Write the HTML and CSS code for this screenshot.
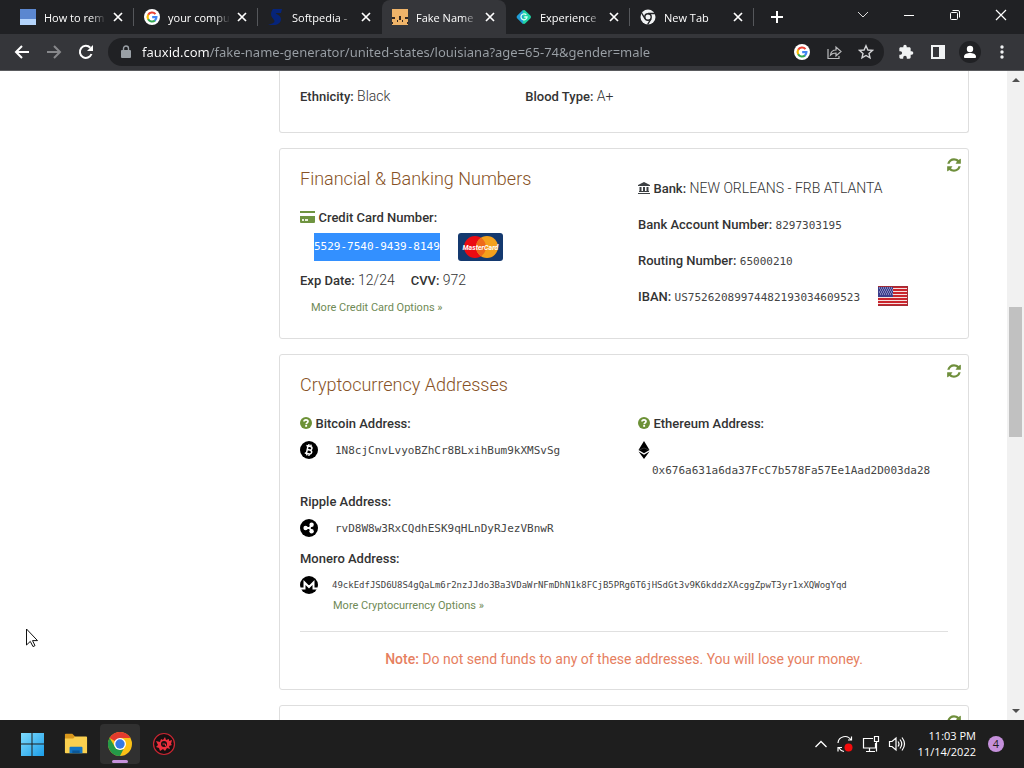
FILE: index.html
```html
<!DOCTYPE html>
<html lang="en">
<head>
<meta charset="utf-8">
<title>Fake Name Generator</title>
<link rel="stylesheet" href="styles.css">
</head>
<body>
<svg class="defs" aria-hidden="true">
  <symbol id="i-google" viewBox="0 0 18 18">
    <circle cx="9" cy="9" r="9" fill="#fff"/>
    <g fill="none" stroke-width="2.4">
      <path d="M12.9 5.7A5 5 0 0 0 4.7 6.5" stroke="#ea4335"/>
      <path d="M4.8 6.3a5.200 5.200 0 0 0 0 5.400" stroke="#fbbc05"/>
      <path d="M4.700 11.500a5 5 0 0 0 7.700 1.300" stroke="#34a853"/>
      <path d="M9.200 9.100H14a5 5 0 0 1-1.800 3.900" stroke="#4285f4"/>
    </g>
  </symbol>
  <symbol id="i-x" viewBox="0 0 10 10"><path d="M1 1l8 8M9 1L1 9" stroke="currentColor" stroke-width="1.700" fill="none"/></symbol>
  <symbol id="i-refresh" viewBox="0 0 1792 1792"><path fill="currentColor" d="M1639 1056q0 5-1 7-64 268-268 434.500t-478 166.500q-146 0-282.500-55t-243.500-157l-129 129q-19 19-45 19t-45-19-19-45v-448q0-26 19-45t45-19h448q26 0 45 19t19 45-19 45l-137 137q71 66 161 102t187 36q134 0 250-65t186-179q11-17 53-117 8-23 30-23h192q13 0 22.500 9.500t9.500 22.500zm25-800v448q0 26-19 45t-45 19h-448q-26 0-45-19t-19-45 19-45l138-138q-148-137-349-137-134 0-250 65t-186 179q-11 17-53 117-8 23-30 23h-199q-13 0-22.500-9.500t-9.500-22.500v-7q65-268 270-434.500t480-166.500q146 0 284 55.500t245 156.500l130-129q19-19 45-19t45 19 19 45z"/></symbol>
  <symbol id="i-help" viewBox="0 0 12 12"><circle cx="6" cy="6" r="6" fill="currentColor"/><path d="M4 4.600C4 2.300 8 2.300 8 4.500 8 5.900 6.200 5.900 6.200 7.300" fill="none" stroke="#fff" stroke-width="1.700"/><rect x="5.200" y="8" width="1.900" height="1.800" fill="#fff"/></symbol>
</svg>

<div class="screen">
  <header class="tabstrip">
    <div class="tabs" role="tablist">
      <div class="tab" role="tab">
        <svg class="favicon" viewBox="0 0 16 16"><path fill="#5b87d0" d="M0 0h16v10H0z"/><path fill="#b4d4fb" d="M0 10h16v6H0z"/></svg>
        <span class="tab-title">How to rem</span>
        <button class="tab-close" aria-label="Close tab"><svg><use href="#i-x"/></svg></button>
      </div>
      <div class="tab" role="tab">
        <svg class="favicon"><use href="#i-google"/></svg>
        <span class="tab-title">your compu</span>
        <button class="tab-close" aria-label="Close tab"><svg><use href="#i-x"/></svg></button>
      </div>
      <div class="tab plain" role="tab">
        <svg class="favicon" viewBox="0 0 16 16"><path fill="#06247a" d="M5 0h9l-1 4H8c-1 1 5 2 5 6 0 4-4 6-7 6H0c4-1 8-3 6-5C5 9 3 8 3 5c0-2 1-4 2-5z"/></svg>
        <span class="tab-title">Softpedia -</span>
        <button class="tab-close" aria-label="Close tab"><svg><use href="#i-x"/></svg></button>
      </div>
      <div class="tab active" role="tab" aria-selected="true">
        <svg class="favicon" viewBox="0 0 16 16"><path fill="#f0b469" d="M0 0h16v16H0z"/><path fill="#35281f" d="M0 8h3v2H0zM13 8h3v2h-3zM7 7h2v4H7zM5 11h1v2H5zM10 11h1v2h-1zM0 13h1v2H0zM15 13h1v2h-1z"/></svg>
        <span class="tab-title">Fake Name</span>
        <button class="tab-close" aria-label="Close tab"><svg><use href="#i-x"/></svg></button>
      </div>
      <div class="tab" role="tab">
        <svg class="favicon" viewBox="0 0 16 16"><rect x="2.500" y="2.500" width="11" height="11" rx="2" transform="rotate(45 8 8)" fill="#1fd3a4"/><path d="M1 7l6-6v14L1 9q-1-1 0-2z" fill="#219bd8"/><path d="M10.300 5.900A3 3 0 1 0 11 8H8.300" fill="none" stroke="#d8fff4" stroke-width="1.300"/></svg>
        <span class="tab-title">Experience</span>
        <button class="tab-close" aria-label="Close tab"><svg><use href="#i-x"/></svg></button>
      </div>
      <div class="tab" role="tab">
        <svg class="favicon" viewBox="0 0 16 16"><circle cx="8" cy="8" r="7.500" fill="#f1f3f4"/><circle cx="8" cy="8" r="3.200" fill="#f1f3f4" stroke="#202124" stroke-width="1.400"/><path d="M8 4.500h7M5 9.700L1.600 4M11 9.800L7.600 15.500" stroke="#202124" stroke-width="1.400"/></svg>
        <span class="tab-title">New Tab</span>
        <button class="tab-close" aria-label="Close tab"><svg><use href="#i-x"/></svg></button>
      </div>
    </div>
    <button class="new-tab" aria-label="New tab"><svg viewBox="0 0 12 12"><path d="M6 0v12M0 6h12" stroke="#fff" stroke-width="2"/></svg></button>
    <div class="window-controls">
      <button aria-label="Search tabs"><svg viewBox="0 0 12 12"><path d="M1 3l5 5 5-5" fill="none" stroke="#ddd"/></svg></button>
      <button aria-label="Minimize"><svg viewBox="0 0 12 12"><path d="M1 6.500h10" stroke="#fff"/></svg></button>
      <button aria-label="Restore"><svg viewBox="0 0 12 12"><rect x="1.500" y="3.500" width="7" height="7" rx="1" fill="none" stroke="#fff"/><path d="M3.500 1.500H9A1.500 1.500 0 0 1 10.500 3v5.500" fill="none" stroke="#fff"/></svg></button>
      <button aria-label="Close"><svg viewBox="0 0 12 12"><path d="M1 1l10 10M11 1L1 11" stroke="#fff" stroke-width="1.200"/></svg></button>
    </div>
  </header>

  <nav class="toolbar">
    <button class="tool" aria-label="Back"><svg viewBox="0 0 16 16"><path d="M15 8H2M8 2L2 8l6 6" fill="none" stroke="#fff" stroke-width="2"/></svg></button>
    <button class="tool" aria-label="Forward"><svg viewBox="0 0 16 16"><path d="M1 8h13M8 2l6 6-6 6" fill="none" stroke="#87888b" stroke-width="2"/></svg></button>
    <button class="tool" aria-label="Reload"><svg viewBox="0 0 16 16"><path d="M13.500 10A6 6 0 1 1 12.300 3.800" fill="none" stroke="#fff" stroke-width="2"/><path d="M15 1v6H9z" fill="#fff"/></svg></button>
    <div class="omnibox">
      <svg class="lock" viewBox="0 0 10 14"><path d="M1 5h8q1 0 1 1v6q0 1-1 1H1q-1 0-1-1V6q0-1 1-1z" fill="#9aa0a6"/><path d="M2.500 6V3.500a2.500 2.500 0 0 1 5 0V6" fill="none" stroke="#9aa0a6" stroke-width="1.400"/></svg>
      <input class="url" type="text" aria-label="Address" value="fauxid.com/fake-name-generator/united-states/louisiana?age=65-74&amp;gender=male">
      <button class="tool" aria-label="Google"><svg><use href="#i-google"/></svg></button>
      <button class="tool" aria-label="Share"><svg viewBox="0 0 16 16"><path d="M2 5v9.500h11V12M4.500 11C5 7.500 7 6 10 6V3l5 4.500L10 12V9C7.500 9 6 9.500 4.500 11z" fill="none" stroke="#bbbcbe" stroke-width="1.200"/></svg></button>
      <button class="tool" aria-label="Bookmark"><svg viewBox="0 0 16 16"><path d="M8 1.800l1.900 4.200 4.500.4-3.400 3 1 4.500L8 11.500l-4 2.400 1-4.500-3.400-3 4.500-.4z" fill="none" stroke="#d4d5d7" stroke-width="1.400"/></svg></button>
    </div>
    <button class="tool" aria-label="Extensions"><svg viewBox="0 0 24 24"><path fill="#f1f3f4" d="M20.500 11H19V7c0-1.100-.9-2-2-2h-4V3.500a2.500 2.500 0 0 0-5 0V5H4c-1.100 0-2 .9-2 2v3.800h1.500a2.700 2.700 0 0 1 0 5.400H2V20c0 1.100.9 2 2 2h3.800v-1.500a2.700 2.700 0 0 1 5.400 0V22H17c1.100 0 2-.9 2-2v-4h1.500a2.500 2.500 0 0 0 0-5z"/></svg></button>
    <button class="tool" aria-label="Side panel"><svg viewBox="0 0 16 16"><path fill="#f1f3f4" fill-rule="evenodd" d="M1 1h14v14H1zM3 3v10h6V3z"/></svg></button>
    <button class="tool avatar" aria-label="Profile"><svg viewBox="0 0 16 16"><circle cx="8" cy="5" r="3.200" fill="#fff"/><path d="M2 14v-1.500C2 10 5.500 9 8 9s6 1 6 3.500V14z" fill="#fff"/></svg></button>
    <button class="tool" aria-label="Menu"><svg viewBox="0 0 16 16"><g fill="#f1f3f4"><circle cx="8" cy="3" r="1.700"/><circle cx="8" cy="8" r="1.700"/><circle cx="8" cy="13" r="1.700"/></g></svg></button>
  </nav>

  <div class="viewport">
    <main class="content">
      <section class="card first">
        <div class="thirds">
          <p><b>Ethnicity:</b> Black</p>
          <p><b>Blood Type:</b> A+</p>
        </div>
      </section>

      <section class="card">
        <button class="refresh" aria-label="Refresh"><svg><use href="#i-refresh"/></svg></button>
        <div class="halves">
          <div>
            <h2>Financial &amp; Banking Numbers</h2>
            <p><svg class="cc" viewBox="0 0 15 12"><path fill="#6f9440" d="M0 0h15v2H0zM0 5h15v6q0 1-1 1H1q-1 0-1-1z"/><path fill="#e8f0dc" d="M2 8h2v2H2zM5 8h3v2H5z"/></svg> <b>Credit Card Number:</b></p>
            <div class="card-number">
              <span class="mono selected">5529-7540-9439-8149</span>
              <svg class="mastercard" viewBox="0 0 45 28" role="img" aria-label="MasterCard"><rect width="45" height="28" rx="3" fill="#14396f"/><circle cx="17" cy="14" r="11" fill="#eb0b12"/><circle cx="29" cy="14" r="11" fill="#f5a11c"/><path d="M23 4.800a11 11 0 0 1 0 18.400 11 11 0 0 1 0-18.400z" fill="#ee6a1a"/><text x="22.500" y="17" text-anchor="middle">MasterCard</text></svg>
            </div>
            <p class="expiry"><span><b>Exp Date:</b> 12/24</span><span><b>CVV:</b> 972</span></p>
            <p class="more"><a href="#cards">More Credit Card Options »</a></p>
          </div>
          <div class="bank">
            <p><svg class="bank-icon" viewBox="0 0 12 12"><path fill="#3c4043" d="M6 0l6 3v1H0V3zM1.500 5h2v4h-2zM5 5h2v4H5zM8.500 5h2v4h-2zM1 9h10v1H1zM0 11h12v1H0z"/></svg> <b>Bank:</b> NEW ORLEANS - FRB ATLANTA</p>
            <p><b>Bank Account Number:</b> <span class="mono">8297303195</span></p>
            <p><b>Routing Number:</b> <span class="mono">65000210</span></p>
            <p class="iban"><span><b>IBAN:</b> <span class="mono">US75262089974482193034609523</span></span>
              <svg class="flag" viewBox="0 0 30 20" role="img" aria-label="United States"><path fill="#f4dfe0" d="M0 0h30v20H0z"/><path d="M0 1h30M0 4h30M0 7h30M0 10h30M0 13h30M0 16h30M0 19h30" stroke="#c9252d" stroke-width="1.800"/><path fill="#3a3d8c" d="M0 0h15v11H0z"/><path d="M1 2h14M2 4h13M1 6h14M2 8h13" stroke="#c9cbea" stroke-dasharray="1 1"/><path d="M0 .5h30M0 19.500h30M29.500 0v20" stroke="#a02c36" fill="none"/></svg>
            </p>
          </div>
        </div>
      </section>

      <section class="card">
        <button class="refresh" aria-label="Refresh"><svg><use href="#i-refresh"/></svg></button>
        <h2>Cryptocurrency Addresses</h2>
        <div class="halves">
          <div>
            <p><svg class="help"><use href="#i-help"/></svg> <b>Bitcoin Address:</b></p>
            <div class="address">
              <svg class="coin" viewBox="0 0 18 18"><circle cx="9" cy="9" r="9"/><g transform="rotate(12 9 9)" fill="none" stroke="#fff" stroke-width="1.500"><path d="M5.500 5.200h4.200a1.800 1.800 0 0 1 0 3.700H7.200M5.500 12.700h4.700a1.900 1.900 0 0 0 0-3.800M7.200 5v7.700M7.800 3.300V5M10 3.300V5M7.800 12.700v2M10 12.700v2"/></g></svg>
              <span class="mono">1N8cjCnvLvyoBZhCr8BLxihBum9kXMSvSg</span>
            </div>
          </div>
          <div>
            <p><svg class="help"><use href="#i-help"/></svg> <b>Ethereum Address:</b></p>
            <div class="address">
              <svg class="ether" viewBox="0 0 12 18"><path d="M6 0l5.500 9L6 12.300.5 9zM.5 10.500L6 13.700l5.500-3.200L6 18z"/><path d="M1 9l5-2 5 2" stroke="#555" stroke-width=".6" fill="none"/></svg>
            </div>
            <p class="mono eth-line">0x676a631a6da37FcC7b578Fa57Ee1Aad2D003da28</p>
          </div>
        </div>
        <p class="coin-label"><b>Ripple Address:</b></p>
        <div class="address">
          <svg class="coin" viewBox="0 0 18 18"><circle cx="9" cy="9" r="9"/><path d="M5.500 9h4l2-3M9.500 9l2 3" stroke="#fff" stroke-width="1.800" fill="none"/><g fill="#fff"><circle cx="5.600" cy="9" r="2.200"/><circle cx="11.600" cy="5.800" r="2.200"/><circle cx="11.600" cy="12.200" r="2.200"/></g></svg>
          <span class="mono">rvD8W8w3RxCQdhESK9qHLnDyRJezVBnwR</span>
        </div>
        <p class="coin-label"><b>Monero Address:</b></p>
        <div class="address monero">
          <svg class="coin" viewBox="0 0 18 18"><circle cx="9" cy="9" r="9"/><path d="M0 12.500h4.500V6.500L9 11l4.500-4.500v6H18" stroke="#fff" stroke-width="2" fill="none"/></svg>
          <span class="mono">49ckEdfJSD6U8S4gQaLm6r2nzJJdo3Ba3VDaWrNFmDhN1k8FCjB5PRg6T6jHSdGt3v9K6kddzXAcggZpwT3yr1xXQWogYqd</span>
        </div>
        <p class="more crypto"><a href="#crypto">More Cryptocurrency Options »</a></p>
        <p class="note"><b>Note:</b> Do not send funds to any of these addresses. You will lose your money.</p>
      </section>

      <section class="card last">
        <button class="refresh" aria-label="Refresh"><svg><use href="#i-refresh"/></svg></button>
      </section>
    </main>
    <div class="scrollbar" aria-hidden="true">
      <svg viewBox="0 0 8 4"><path d="M0 4l4-4 4 4z"/></svg>
      <div class="track"><div class="thumb"></div></div>
      <svg viewBox="0 0 8 4"><path d="M0 0l4 4 4-4z"/></svg>
    </div>
    <svg class="pointer" viewBox="0 0 12 20"><path d="M.5 1v16l3.800-3.600 2.700 5.200 2-1-2.500-5h5z" fill="#fff" stroke="#111"/></svg>
  </div>

  <footer class="taskbar">
    <div class="apps">
      <button aria-label="Start"><svg viewBox="0 0 24 24"><defs><linearGradient id="win" x2="1" y2="1"><stop stop-color="#7fdcff"/><stop offset="1" stop-color="#1b9de8"/></linearGradient></defs><path fill="url(#win)" d="M1 1h10.500v10.500H1zM12.500 1H24v10.500H12.500zM1 12.500h10.500V24H1zM12.500 12.500H24V24H12.500z"/></svg></button>
      <button aria-label="File Explorer"><svg viewBox="0 0 26 24"><path fill="#d9971c" d="M1 2q0-1 1-1h7l3 3v4H1z"/><path fill="#fbd04f" d="M1 6h9l2-2h12q1 0 1 1v17H2q-1 0-1-1z"/><path fill="#1375c4" d="M6 22v-6q0-1 1-1h12q1 0 1 1v6z"/><path fill="#0c5797" d="M9 19h8v3H9z"/></svg></button>
      <button class="running" aria-label="Chrome"><svg viewBox="0 0 24 24"><circle cx="12" cy="12" r="12" fill="#fbc116"/><path fill="#e33b2e" d="M12 12L1.600 6A12 12 0 0 1 22.400 6H12z"/><path fill="#249a48" d="M12 24A12 12 0 0 1 1.600 6L7 15l5 3 3.500-1z"/><circle cx="12" cy="12" r="6" fill="#fff"/><circle cx="12" cy="12" r="4.700" fill="#3478e5"/></svg></button>
      <button aria-label="Security tool"><svg viewBox="0 0 24 24"><circle cx="12" cy="12" r="10.500" fill="#171011" stroke="#c92632" stroke-width="1.200"/><path fill="#ed2f3d" d="M4 9l4 1 1-3 2 1 2-3 1 3 3-1v2l3-1-1 4 1 1-3 1 1 3-3-1-2 3-2-2-3 2-1-3-3-1 2-2z"/><circle cx="12" cy="12" r="3" fill="#171011"/><path d="M10.500 12h3v2" stroke="#ed2f3d" fill="none"/></svg></button>
    </div>
    <div class="tray">
      <svg class="caret" viewBox="0 0 12 12"><path d="M.5 9L6 3.500 11.500 9" fill="none" stroke="#fff" stroke-width="1.300"/></svg>
      <svg class="sync" viewBox="0 0 18 18"><path d="M2 8a7 7 0 0 1 13-3M15.500 1.500V5H12M8 16.500a7 7 0 0 1-5-3.500M2 16.500V12.500h4" fill="none" stroke="#fff" stroke-width="1.200"/><circle cx="12.500" cy="12.500" r="4" fill="#f40d0d"/></svg>
      <svg class="network" viewBox="0 0 18 18"><path d="M11 3.500H1.500v9.500h12V8M7.500 13v3M4 16.500h9M12.500 1.500h4v5h-4zM14.500 6.500v10" fill="none" stroke="#fff" stroke-width="1.200"/></svg>
      <svg class="volume" viewBox="0 0 18 18"><path d="M1.500 6.500H4l4-3.500v12l-4-3.500H1.500zM10 6.500q2 2.500 0 5M12 4.500q3.500 4.500 0 9M14 2.500q5 6.500 0 13" fill="none" stroke="#fff" stroke-width="1.200"/></svg>
      <div class="clock"><span>11:03 PM</span><span>11/14/2022</span></div>
      <span class="badge">4</span>
    </div>
  </footer>
</div>
</body>
</html>
```
FILE: styles.css
```css
* { box-sizing: border-box; }
body { margin: 0; font-family: Roboto, sans-serif; font-size: 14px; font-weight: 300; color: #333; }
p, h2 { margin: 0; }
svg { display: block; flex: none; }
button { padding: 0; border: 0; background: none; color: inherit; font: inherit; display: flex; align-items: center; justify-content: center; flex: none; }
.defs { display: none; }
.screen { height: 100vh; display: flex; flex-direction: column; overflow: hidden; }

/* browser tabs */
.tabstrip { height: 34px; flex: none; display: flex; background: #202124; color: #fff; padding-left: 10px; font-family: "Open Sans", "Noto Sans", sans-serif; font-size: 11px; font-weight: 400; }
.tabs { display: flex; }
.tab { width: 124px; display: flex; align-items: center; padding: 0 10px; position: relative; }
.tab::after { content: ""; width: 1px; height: 18px; background: #55575b; position: absolute; right: 0; top: 8px; }
.tab.plain::after, .tab.active::after { display: none; }
.tab.active { background: #35363a; border-radius: 8px 8px 0 0; }
.favicon { width: 16px; height: 16px; }
.tab-title { flex: 1; min-width: 0; margin-left: 8px; white-space: nowrap; -webkit-mask-image: linear-gradient(to right, #000 75%, transparent); mask-image: linear-gradient(to right, #000 75%, transparent); }
.tab-close { width: 12px; height: 16px; margin-left: 6px; }
.tab-close svg { width: 10px; height: 10px; }
.new-tab { width: 46px; }
.new-tab svg { width: 12px; height: 12px; }
.window-controls { display: flex; margin-left: auto; }
.window-controls button { width: 46px; height: 29px; }
.window-controls svg { width: 12px; height: 12px; }

/* browser toolbar */
.toolbar { height: 37px; flex: none; display: flex; align-items: center; background: #35363a; border-bottom: 1px solid #5a5b5e; padding: 0 6px; }
.tool { width: 32px; height: 28px; }
.tool svg { width: 16px; height: 16px; }
.omnibox { flex: 1; min-width: 0; height: 28px; margin: 0 6px; padding: 0 2px 0 13px; display: flex; align-items: center; background: #202124; border-radius: 14px; }
.lock { width: 10px; height: 14px; }
.url { flex: 1; min-width: 0; height: 28px; margin-left: 11px; padding: 0; border: 0; outline: 0; font: 400 13px "Noto Sans", "Open Sans", sans-serif; color: transparent; background: linear-gradient(to right, #fff 68px, #9aa0a6 68px); -webkit-background-clip: text; background-clip: text; }
.avatar svg { width: 22px; height: 22px; padding: 3px; border-radius: 50%; background: #202124; }

/* page */
.viewport { flex: 1; min-height: 0; display: flex; position: relative; overflow: hidden; background: #fff; }
.content { flex: 1; min-width: 0; display: flex; flex-direction: column; gap: 15px; padding: 0 38px 0 279px; }
.card { position: relative; flex: none; border: 1px solid #dedede; border-radius: 3px; padding: 18px 20px; line-height: 24px; }
.card.first { border-top: 0; border-radius: 0 0 3px 3px; padding: 13px 20px 24px; }
.card.last { height: 120px; }
.card b { font-size: 13px; font-weight: 500; line-height: 1; }
.thirds { display: grid; grid-template-columns: repeat(3, 1fr); gap: 28px; }
.halves { display: grid; grid-template-columns: repeat(2, 1fr); gap: 28px; }
.card p { min-height: 24px; }
.card p svg { display: inline-block; vertical-align: -1px; }
h2 { font-size: 18px; font-weight: 300; line-height: 24px; color: #875226; margin-bottom: 14px; }
.mono { font-family: "DejaVu Sans Mono", monospace; font-size: 11px; line-height: 11px; font-weight: 400; color: #444; }
.refresh { position: absolute; top: 8px; right: 6px; color: #6f8f3c; }
.refresh svg { width: 16px; height: 16px; }
.cc { width: 15px; height: 12px; }
.card-number { display: flex; align-items: center; gap: 18px; margin: 4px 0 7px 14px; }
.selected { background: #3390ff; color: #fff; line-height: 28px; }
.mastercard { width: 45px; height: 28px; }
.mastercard text { font: italic 700 7px Roboto, sans-serif; fill: #fff; }
.expiry { display: flex; gap: 16px; }
.more { font-size: 11px; font-weight: 400; margin: 4px 0 0 11px; }
.more a { color: #6f8a55; text-decoration: none; }
.bank { padding-top: 3px; line-height: 36px; white-space: nowrap; }
.bank-icon { width: 12px; height: 12px; }
.iban { display: flex; align-items: center; gap: 18px; }
.flag { width: 30px; height: 20px; }
.help { width: 12px; height: 12px; color: #6c9136; }
.address { display: flex; align-items: center; gap: 17px; height: 24px; margin-top: 3px; }
.coin { width: 18px; height: 18px; }
.ether { width: 12px; height: 18px; }
.card .eth-line { line-height: 24px; margin: -3px 0 0 14px; }
.coin-label { margin-top: 6px; }
.monero { gap: 14px; }
.monero .mono { font-size: 9px; }
.card .crypto { min-height: 0; margin: 0 0 16px 33px; line-height: 18px; }
.note { border-top: 1px solid #e0e0e0; padding-top: 15px; text-align: center; font-weight: 400; color: #e6805f; }
.card .note b { font-size: 14px; }
.scrollbar { width: 17px; flex: none; background: #f1f1f1; display: flex; flex-direction: column; align-items: center; padding: 7px 0; }
.scrollbar svg { width: 8px; height: 4px; fill: #505050; }
.track { flex: 1; width: 13px; padding-top: 225px; }
.thumb { height: 130px; background: #c1c1c1; }
.pointer { position: absolute; left: 26px; top: 557px; width: 12px; height: 20px; }

/* taskbar */
.taskbar { height: 48px; flex: none; display: flex; align-items: center; justify-content: space-between; background: #1e1e1e; padding: 0 20px 0 12px; color: #fff; font-family: "Open Sans", "Noto Sans", sans-serif; font-size: 11px; font-weight: 400; }
.apps { display: flex; gap: 4px; }
.apps button { width: 40px; height: 40px; border-radius: 4px; position: relative; }
.apps svg { width: 24px; height: 24px; }
.running { background: #303030; }
.running::after { content: ""; position: absolute; left: 12px; bottom: 1px; width: 16px; height: 3px; border-radius: 2px; background: #c691dc; }
.tray { display: flex; align-items: center; }
.tray .caret { width: 12px; height: 12px; margin-right: 9px; }
.tray .sync, .tray .network, .tray .volume { width: 18px; height: 18px; margin-right: 8px; }
.clock { display: flex; flex-direction: column; align-items: flex-end; line-height: 16px; margin: 0 12px 0 4px; }
.badge { width: 16px; height: 16px; border-radius: 50%; background: #c691dc; color: #1e1e1e; line-height: 16px; text-align: center; font-size: 11px; }
```
